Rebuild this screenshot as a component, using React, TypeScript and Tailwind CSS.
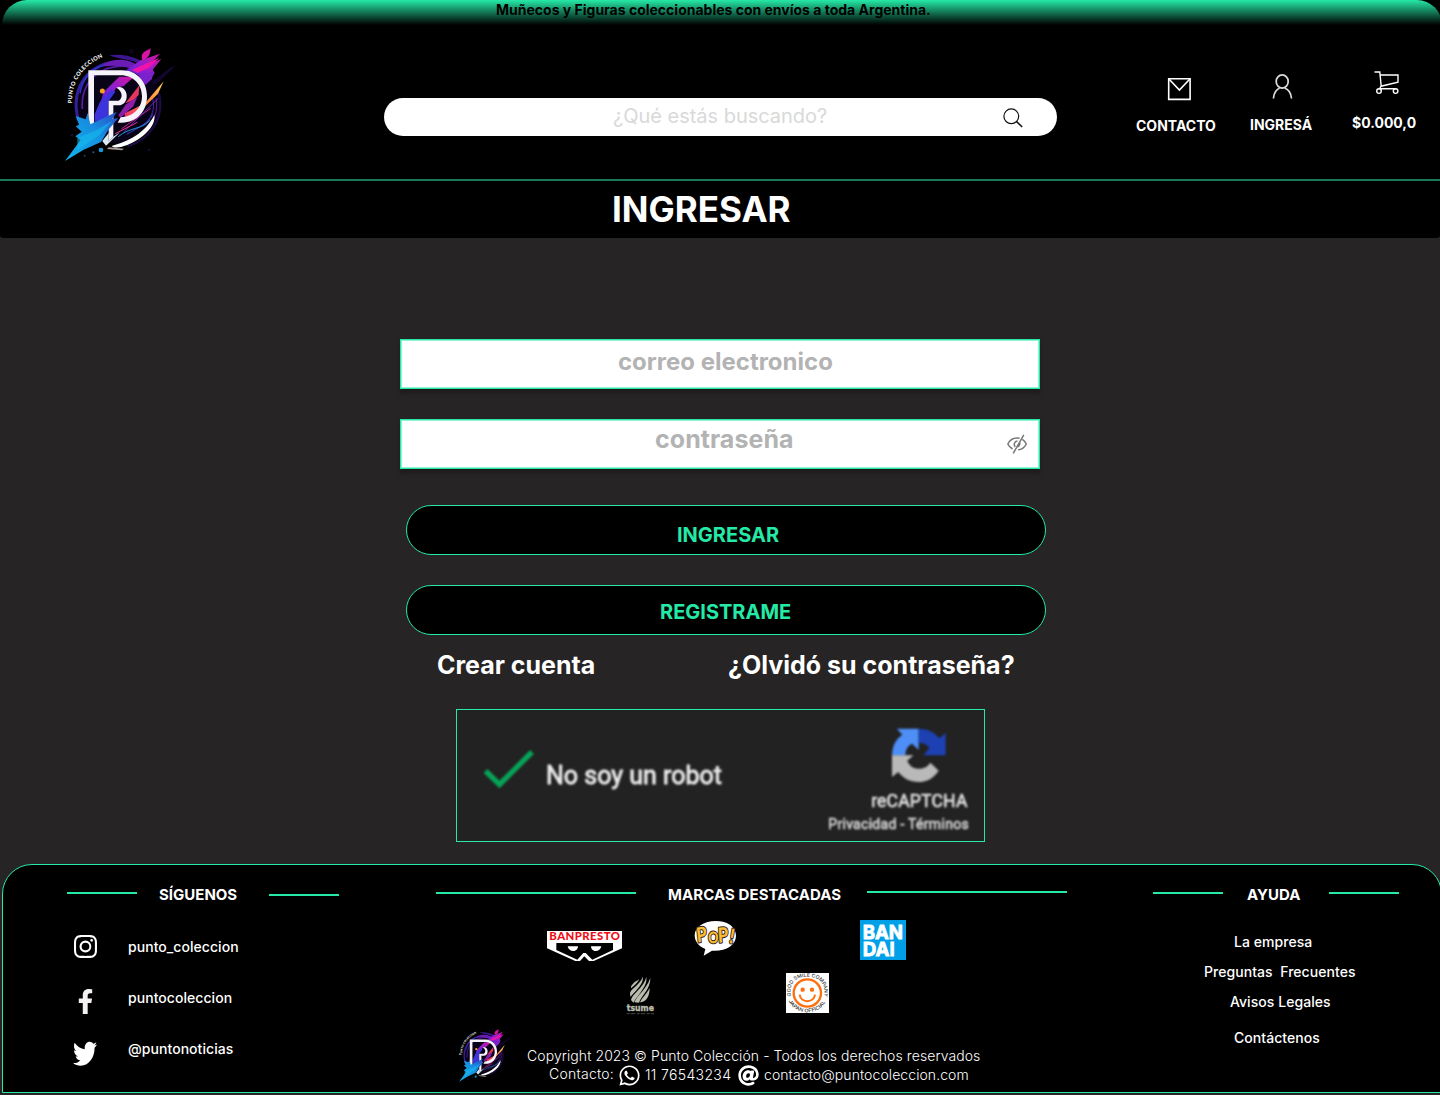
import type { ReactNode } from "react";
import { BsInstagram } from "react-icons/bs";
import { FaAt, FaFacebookF, FaTwitter, FaWhatsapp } from "react-icons/fa";

function Logo({ className, id }: { className: string; id: string }) {
  return (
    <svg viewBox="0 0 420 405" className={className} aria-label="Punto Coleccion">
      <defs>
        <linearGradient id={id + "blue"} x1="0" y1="1" x2="1" y2="0">
          <stop offset="0" stopColor="#12b5ee" />
          <stop offset="0.6" stopColor="#168fe0" />
          <stop offset="1" stopColor="#2f49c8" />
        </linearGradient>
        <linearGradient id={id + "fire"} x1="0" y1="1" x2="1" y2="0">
          <stop offset="0" stopColor="#e8247c" />
          <stop offset="0.5" stopColor="#ff7a35" />
          <stop offset="1" stopColor="#ffd25a" />
        </linearGradient>
        <linearGradient id={id + "mag"} x1="0" y1="1" x2="1" y2="0">
          <stop offset="0" stopColor="#4b22d8" />
          <stop offset="0.5" stopColor="#8d1fd0" />
          <stop offset="1" stopColor="#d6159f" />
        </linearGradient>
        <path id={id + "arc"} d="M66 205 C64 145 95 90 168 62" />
      </defs>
      <circle cx="205" cy="203" r="124" fill="#090318" />
      <g fill="none">
        <path d="M85 255C58 155 121 77 216 81" stroke="#32209c" strokeWidth="9" />
        <path d="M97 222C91 139 151 88 235 93" stroke="#5a1ca8" strokeWidth="5" />
        <path d="M90 175C98 130 125 100 165 90" stroke="#2d35c9" strokeWidth="4" />
        <path d="M327 175C345 250 300 312 232 335" stroke="#1c0b42" strokeWidth="7" />
        <path d="M318 190C326 225 311 261 288 284" stroke="#6c1c91" strokeWidth="3" />
        <path d="M308 190C318 225 300 255 280 272" stroke="#3f2ab0" strokeWidth="3" />
      </g>
      <path d="M178 61C210 56 250 62 285 84L262 84C235 72 205 72 178 61Z" fill="#3c168e" />
      <path d="M160 86C200 66 240 74 262 90L246 103C215 90 190 92 160 94Z" fill="#6a1cb4" />
      <path d="M228 106L272 76L330 56L304 84L334 72L308 104L314 114L300 134L284 142L262 118Z" fill={`url(#${id}mag)`} />
      <path d="M246 104L328 68L298 98L262 114Z" fill="#ee13aa" />
      <path d="M266 126L310 108L306 132L286 150Z" fill="#7a23cb" />
      <path d="M305 139L332 120L362 97L377 92L346 123L311 153Z" fill="#12062a" />
      <path d="M276 72C272 54 284 50 302 40C300 58 297 70 276 76Z" fill="#d615a5" />
      <path d="M208 125H252L222 152L198 160L185 180L150 210L160 172Z" fill={`url(#${id}mag)`} />
      <path d="M134 238L150 200L184 164L196 170L176 198V245L134 262Z" fill="#3d33dc" />
      <path d="M226 205L268 151L266 180L250 196Z" fill="#e5365e" />
      <path d="M205 241L228 208L262 186L250 214L212 248Z" fill="#8c1fa8" />
      <path d="M225 235L285 205L341 139L324 176L286 213L222 262Z" fill={`url(#${id}fire)`} />
      <g strokeWidth="3" fill="none">
        <path d="M214 282L302 220" stroke="#cb2092" />
        <path d="M222 290L325 190" stroke="#6a20b0" />
        <path d="M230 298C265 278 295 265 308 238" stroke="#3b45c8" />
        <path d="M205 305C240 275 275 285 300 256" stroke="#1b98df" />
        <path d="M196 296L262 262" stroke="#e23a8a" />
      </g>
      <circle cx="157" cy="168" r="7.5" fill="#f6a31c" />
      <path d="M313 240C319 274 276 313 232 330C207 339 192 340 185 333C235 318 284 297 313 240Z" fill="#fff" />
      <path fillRule="evenodd" d="M115 106H216C259 106 291 139 291 184C291 229 260 263 216 263H203L212 247C248 245 276 222 276 184C276 148 249 121 213 121H132V280L115 290Z" fill="#f7f3fb" />
      <path d="M199 158C216 151 232 167 230 186C229 202 218 211 206 211H190V305L176 318V197H206C218 190 220 170 199 158Z" fill="#f7f3fb" />
      <path d="M45 378L92 315L76 304L95 290L77 274L87 269L77 243L107 253L113 234L121 268L153 253L201 230L187 252L204 250L174 286L153 321L101 344Z" fill={`url(#${id}blue)`} />
      <path d="M82 310L140 285L187 257L148 301L82 344Z" fill="#14bbef" opacity=".6" />
      <path d="M157 318L176 294V318L190 305L210 292L168 332Z" fill="#dcecf6" />
      <path d="M176 337L222 341L216 346L171 342Z" fill="#a99c9a" />
      <circle cx="153" cy="345" r="7" fill="#159bd5" />
      <circle cx="130" cy="352" r="3" fill="#1c5f92" />
      <circle cx="104" cy="362" r="3" fill="#143e66" />
      <circle cx="66" cy="301" r="4" fill="#141034" />
      <circle cx="244" cy="49" r="5" fill="none" stroke="#1c0c3c" strokeWidth="3" />
      <circle cx="297" cy="345" r="4" fill="#160a35" />
      <text fill="#fff" fontFamily="Lato" fontWeight="900" fontSize="17">
        <textPath href={`#${id}arc`} textLength="178" lengthAdjust="spacing">PUNTO COLECCION</textPath>
      </text>
    </svg>
  );
}

function Rule({ className }: { className: string }) {
  return <div className={"h-0.5 shrink-0 bg-[#25e9a6] " + className} />;
}

function FooterTitle({ children, className }: { children: ReactNode; className: string }) {
  return <h2 className={"shrink-0 text-[15px] leading-none font-bold " + className}>{children}</h2>;
}

function Banpresto() {
  return (
    <svg viewBox="0 0 225 90" className="mt-[11px] ml-[111px] h-[30px] w-[75px] shrink-0 overflow-visible">
      <path d="M0 0H225V52L140 90H85L0 52Z" fill="#fff" />
      <text x="7" y="26.5" textLength="212" lengthAdjust="spacing" fontFamily="Lato" fontWeight="900" fontSize="34" fill="#f00c14">BANPRESTO</text>
      <path d="M28 36H198V57L136 86L116 66H109L91 86L28 57Z" fill="#000" />
      <path d="M91 90L108 68H117L134 90H126L112 75L99 90Z" fill="#fff" />
      <path d="M99 90L112 76L126 90Z" fill="#000" />
      <path d="M62 46H93C93 65 65 65 62 46ZM132 46H163C160 65 132 65 132 46Z" fill="#fff" />
    </svg>
  );
}

function Pop() {
  return (
    <svg viewBox="0 0 129 108" className="mt-[1px] ml-[72px] h-9 w-[43px] shrink-0 overflow-visible">
      <path d="M29 104L34 84C13 76 2 60 2 43C2 17 31 0 65 0C101 0 126 18 126 44C126 73 94 92 54 89Z" fill="#fff" />
      <text x="10" y="65" textLength="108" lengthAdjust="spacingAndGlyphs" fontFamily="Lato" fontWeight="900" fill="#fbbb33" stroke="#282018" strokeWidth="6" paintOrder="stroke" strokeLinejoin="round" fontSize="62" rotate="-8 4 -4 12">P<tspan fontSize="48">O</tspan>P!</text>
    </svg>
  );
}

function Bandai() {
  return (
    <svg viewBox="0 0 138 120" className="ml-[123px] h-10 w-[46px] shrink-0">
      <path d="M0 0H138V120H0Z" fill="#00a0e9" />
      <g fontFamily="Inter" fontWeight="700" fontSize="58" fill="#fff" stroke="#fff" strokeWidth="2.5">
        <text x="8" y="57" textLength="121" lengthAdjust="spacingAndGlyphs">BAN</text>
        <text x="8" y="108" textLength="96" lengthAdjust="spacingAndGlyphs">DAI</text>
      </g>
    </svg>
  );
}

function Tsume() {
  return (
    <svg viewBox="0 0 90 117" className="mt-[15px] ml-[190px] h-[39px] w-[30px] shrink-0">
      <g fill="#b9bcae">
        <path d="M15 31C22 20 29 16 40 10C35 18 27 29 15 37Z" />
        <path d="M12 51C16 36 42 27 50 2C55 20 32 41 13 63Z" />
        <path d="M15 72C18 54 53 35 61 3C65 29 41 50 22 80Z" />
        <path d="M25 79C34 56 60 43 73 5C74 39 48 56 39 80Z" />
        <path d="M42 79C49 64 61 55 71 36C71 58 64 74 46 79Z" />
        <text x="2" y="105" textLength="82" lengthAdjust="spacingAndGlyphs" fontFamily="DejaVu Sans" fontWeight="bold" fontSize="26" stroke="#b9bcae">tsume</text>
      </g>
      <path d="M2 113H84" stroke="#45483f" strokeWidth="3" strokeDasharray="9 3 14 4" />
    </svg>
  );
}

function GoodSmile() {
  return (
    <svg viewBox="0 0 129 120" className="mt-[12px] ml-[130px] h-10 w-[43px] shrink-0 overflow-visible">
      <path d="M0 0H129V120H0Z" fill="#fff" />
      <defs>
        <path id="gs-top" d="M15 70C7 30 32 11 64 11C96 11 121 30 114 71" />
        <path id="gs-bottom" d="M8 84C28 129 100 129 120 84" />
      </defs>
      <g fontFamily="Inter" fontWeight="500" fontSize="15" fill="#333">
        <text><textPath href="#gs-top" textLength="182" lengthAdjust="spacingAndGlyphs">GOOD SMILE COMPANY</textPath></text>
        <text><textPath href="#gs-bottom" textLength="136" lengthAdjust="spacingAndGlyphs">JAPAN OFFICIAL</textPath></text>
      </g>
      <circle cx="64" cy="60" r="41" fill="#fff" stroke="#ff6d0d" strokeWidth="7" />
      <circle cx="50" cy="50" r="6.5" fill="#ff6d0d" />
      <circle cx="78" cy="50" r="6.5" fill="#ff6d0d" />
      <path d="M41 65C44 91 84 91 87 65" fill="none" stroke="#ff6d0d" strokeWidth="6" />
    </svg>
  );
}

function Header() {
  return (
    <header className="h-[181px] overflow-hidden border-b-2 border-[#177a5a] bg-black text-white">
      <div className="ml-0.5 h-[25px] w-[1440px] rounded-t-[25px] bg-linear-to-b/srgb from-[#25e9a6] to-black pt-[3px] pl-[494px]">
        <p className="text-sm leading-none font-bold text-black">Muñecos y Figuras coleccionables con envíos a toda Argentina.</p>
      </div>
      <div className="flex items-start">
        <Logo id="head" className="mt-[10px] ml-[50px] h-[135px] w-[140px] shrink-0" />
        <label className="mt-[73px] ml-[194px] flex h-[38px] w-[673px] shrink-0 rounded-[20px] bg-white">
          <span className="mt-[8px] ml-[229px] w-[215px] text-xl leading-none tracking-[-0.02px] text-[#d9d9d9]">¿Qué estás buscando?</span>
          <svg viewBox="0 0 20 20" className="mt-[10px] ml-[175px] size-5" fill="none" stroke="#111" strokeWidth="1.2">
            <circle cx="8.3" cy="8.3" r="7.4" />
            <path d="M13.6 13.6L19.2 19" strokeWidth="1.5" />
          </svg>
        </label>
        <nav className="flex items-start text-sm leading-none font-bold">
          <a className="mt-[52px] ml-[79px] flex w-[82px] flex-col">
            <svg viewBox="0 0 24 24" className="ml-[31px] size-6" fill="none" stroke="#fff" strokeWidth="1.6">
              <path d="M1.7 1.7H23.1V22.4H1.7Z" />
              <path d="M1.7 1.7L12.4 13L23.1 1.7" />
            </svg>
            <span className="mt-[18px]">CONTACTO</span>
          </a>
          <a className="mt-[49px] ml-[32px] flex w-[64px] flex-col">
            <svg viewBox="0 0 22 26" className="ml-[21px] h-[26px] w-[22px]" fill="none" stroke="#ddd" strokeWidth="1.7">
              <ellipse cx="11.2" cy="7.5" rx="6" ry="6.6" />
              <path d="M2.4 24.5C2.6 18.7 6 14.9 8.6 14.2M13.8 14.2C17 15 20.2 18.7 20.5 24.5" />
            </svg>
            <span className="mt-[18px]">INGRESÁ</span>
          </a>
          <a className="mt-[45px] ml-[38px] flex w-[66px] flex-col">
            <svg viewBox="0 0 26 26" className="ml-[21.5px] size-[26px]" fill="none" stroke="#fff" strokeWidth="1.4">
              <path d="M.5 2H5.8L7.2 16.2M6.2 5H24V12.2L7 16.2L5.5 19M6.5 18.8H22" />
              <circle cx="5" cy="21.1" r="2.3" />
              <circle cx="21.6" cy="21.1" r="2.3" />
            </svg>
            <span className="mt-[20px]">$0.000,0</span>
          </a>
        </nav>
      </div>
    </header>
  );
}

function Captcha() {
  return (
    <div className="mt-[30px] ml-[56px] flex h-[133px] w-[529px] border border-[#25e9a6] bg-[#222] font-['Roboto']">
      <div className="flex blur-[0.8px]">
        <svg viewBox="0 0 50 40" className="mt-[40px] ml-[27px] h-10 w-[50px]" fill="none" stroke="#07a357" strokeWidth="5.4">
          <path d="M1.5 21L15.5 34.5L48 2" />
        </svg>
        <p className="mt-[53px] ml-[12px] w-[180px] text-[25px] leading-none whitespace-nowrap text-[#f0f0f0] [-webkit-text-stroke:0.9px_#e8e8e8]">No soy un robot</p>
        <div className="ml-[100px] flex w-[143px] flex-col items-end text-[#e4e4e4]">
          <svg viewBox="0 0 156 162" preserveAspectRatio="none" className="mt-[18px] mr-[23px] h-[54px] w-[54px]">
            <path d="M0 82C1 52 12 32 30 20L14 2H77V66L58 47C44 54 39 66 39 82Z" fill="#4e8ff7" />
            <path d="M77 2C104 2 124 14 137 31L155 15V82H91L108 60C100 49 91 45 77 45Z" fill="#1d41b3" />
            <path d="M0 82H62L44 98C50 113 61 122 77 122C94 122 103 115 111 104L135 128C121 150 101 162 77 162C52 162 33 152 18 132L0 147Z" fill="#b9b9b9" />
          </svg>
          <span className="mt-[11px] mr-[1.5px] text-[17.5px] leading-none tracking-[0.2px] [-webkit-text-stroke:0.7px_#dedede]">reCAPTCHA</span>
          <span className="mt-[6.5px] text-[14px] leading-none tracking-[0.3px] whitespace-nowrap [-webkit-text-stroke:0.6px_#d4d4d4]">Privacidad - Términos</span>
        </div>
      </div>
    </div>
  );
}

function LoginForm() {
  return (
    <main className="ml-[400px] flex h-[626px] w-[646px] flex-col pt-[101px]">
      <div className="h-[50px] w-[640px] shrink-0 border border-[#25e9a6] bg-white pt-[10px] pl-[217px] shadow-[inset_0_0_0_1px_#92f4d3,0_4px_4px_rgba(0,0,0,0.25)]">
        <span className="block text-2xl leading-none font-bold text-[#b3b3b3]">correo electronico</span>
      </div>
      <div className="mt-[30px] flex h-[50px] w-[640px] shrink-0 border border-[#25e9a6] bg-white shadow-[inset_0_0_0_1px_#92f4d3,0_4px_4px_rgba(0,0,0,0.25)]">
        <span className="mt-[7px] ml-[254px] w-[140px] text-[25px] leading-none font-bold tracking-[0.05px] text-[#b3b3b3]">contraseña</span>
        <svg viewBox="0 0 20 20" className="mt-[14px] ml-[212px] size-5" fill="none" stroke="#777" strokeWidth="1.5">
          <path d="M5.5 15C3 13.5 1.5 11.5.8 10C3 5.8 7 3.3 12.5 4.3M15.4 5.4C17.5 6.8 18.8 8.8 19.3 10C17.6 13.3 14.8 15.5 11.2 15.8" />
          <path d="M8.3 12.7C6.4 10.9 7.2 7 10.5 6.9M12.7 8.6C13.2 10.6 12 12.3 10.3 12.7" />
          <path d="M6.2 19.4L16.8.8" />
        </svg>
      </div>
      <button className="mt-[36px] ml-[6px] flex h-[50px] w-[640px] shrink-0 rounded-[25px] border border-[#25e9a6] bg-black pt-[19px] pl-[270px] text-xl leading-none font-bold text-[#25e9a6]">INGRESAR</button>
      <button className="mt-[30px] ml-[6px] flex h-[50px] w-[640px] shrink-0 rounded-[25px] border border-[#25e9a6] bg-black pt-[16px] pl-[253px] text-xl leading-none font-bold text-[#25e9a6]">REGISTRAME</button>
      <div className="mt-[18px] flex h-[26px] shrink-0 text-[25px] leading-none font-bold whitespace-nowrap text-white">
        <a className="ml-[37px] w-[160px]">Crear cuenta</a>
        <a className="ml-[131px]">¿Olvidó su contraseña?</a>
      </div>
      <Captcha />
    </main>
  );
}

function Footer() {
  return (
    <footer className="ml-0.5 flex h-[229px] w-[1440px] items-start rounded-t-[30px] border border-[#25e9a6] bg-black text-sm leading-none font-[450] tracking-[0.05px] whitespace-nowrap text-white">
      <section className="w-[433px] shrink-0 pl-[64px]">
        <div className="flex items-start">
          <Rule className="mt-[27px] w-[70px]" />
          <FooterTitle className="mt-[22px] ml-[22px] w-[80px] tracking-normal">SÍGUENOS</FooterTitle>
          <Rule className="mt-[29px] ml-[30px] w-[70px]" />
        </div>
        <a className="mt-[32px] flex h-[24px] items-start">
          <BsInstagram className="mt-[1px] ml-[7px] size-[23px] shrink-0" />
          <span className="mt-[6px] ml-[31px]">punto_coleccion</span>
        </a>
        <a className="mt-[30px] flex h-[26px] items-start">
          <FaFacebookF className="mt-[1px] ml-[6px] h-[25px] w-[25px] shrink-0 text-[#f3f1f1]" />
          <span className="mt-[3px] ml-[30px]">puntocoleccion</span>
        </a>
        <a className="mt-[25px] flex h-[26px] items-start">
          <FaTwitter preserveAspectRatio="none" className="-mt-[0.5px] ml-[6px] h-[29.5px] w-6 shrink-0" />
          <span className="mt-[3px] ml-[31px]">@puntonoticias</span>
        </a>
      </section>
      <section className="w-[717px] shrink-0">
        <div className="flex items-start">
          <Rule className="mt-[27px] w-[200px]" />
          <FooterTitle className="mt-[22px] ml-8 w-[175px] tracking-[0.07px]">MARCAS DESTACADAS</FooterTitle>
          <Rule className="mt-[26px] ml-6 w-[200px]" />
        </div>
        <div className="mt-[18px] flex h-[41px] items-start">
          <Banpresto />
          <Pop />
          <Bandai />
        </div>
        <div className="flex h-[62px] items-start">
          <Tsume />
          <GoodSmile />
        </div>
        <div className="flex items-start">
          <Logo id="foot" className="ml-[16px] h-[63px] w-[65px] shrink-0" />
          <div className="mt-[26px] ml-[10px] font-light tracking-[0.08px]">
            <p>Copyright 2023 © Punto Colección - Todos los derechos reservados</p>
            <p className="mt-[1px] flex items-start">
              <span className="mt-[3px] ml-[22px] w-[66px] tracking-[0.25px]">Contacto:</span>
              <FaWhatsapp className="ml-[2.5px] size-[23px] shrink-0" />
              <span className="mt-[4px] ml-[4.5px] w-[88px] tracking-[0.35px]">11 76543234</span>
              <FaAt className="mt-[1px] ml-[5px] size-[21px] shrink-0" />
              <span className="mt-[4px] ml-[5px]">contacto@puntocoleccion.com</span>
            </p>
          </div>
        </div>
      </section>
      <section className="shrink-0">
        <div className="flex items-start">
          <Rule className="mt-[27px] w-[70px]" />
          <FooterTitle className="mt-[22px] ml-[24px] w-[54px] tracking-normal">AYUDA</FooterTitle>
          <Rule className="mt-[27px] ml-[28px] w-[70px]" />
        </div>
        <ul>
          <li className="mt-[33px] ml-[81px]">La empresa</li>
          <li className="mt-[16px] ml-[51px] whitespace-pre">Preguntas  Frecuentes</li>
          <li className="mt-[16px] ml-[77px]">Avisos Legales</li>
          <li className="mt-[22px] ml-[81px]">Contáctenos</li>
        </ul>
      </section>
    </footer>
  );
}

export default function App() {
  return (
    <div className="h-[1095px] w-[1440px] overflow-hidden bg-[#272425] font-['Inter',sans-serif]">
      <Header />
      <div className="h-[57px] rounded-b-[3px] bg-black pt-[11px] pl-[612px]">
        <h1 className="text-[35px] leading-none font-bold text-white">INGRESAR</h1>
      </div>
      <LoginForm />
      <Footer />
    </div>
  );
}
